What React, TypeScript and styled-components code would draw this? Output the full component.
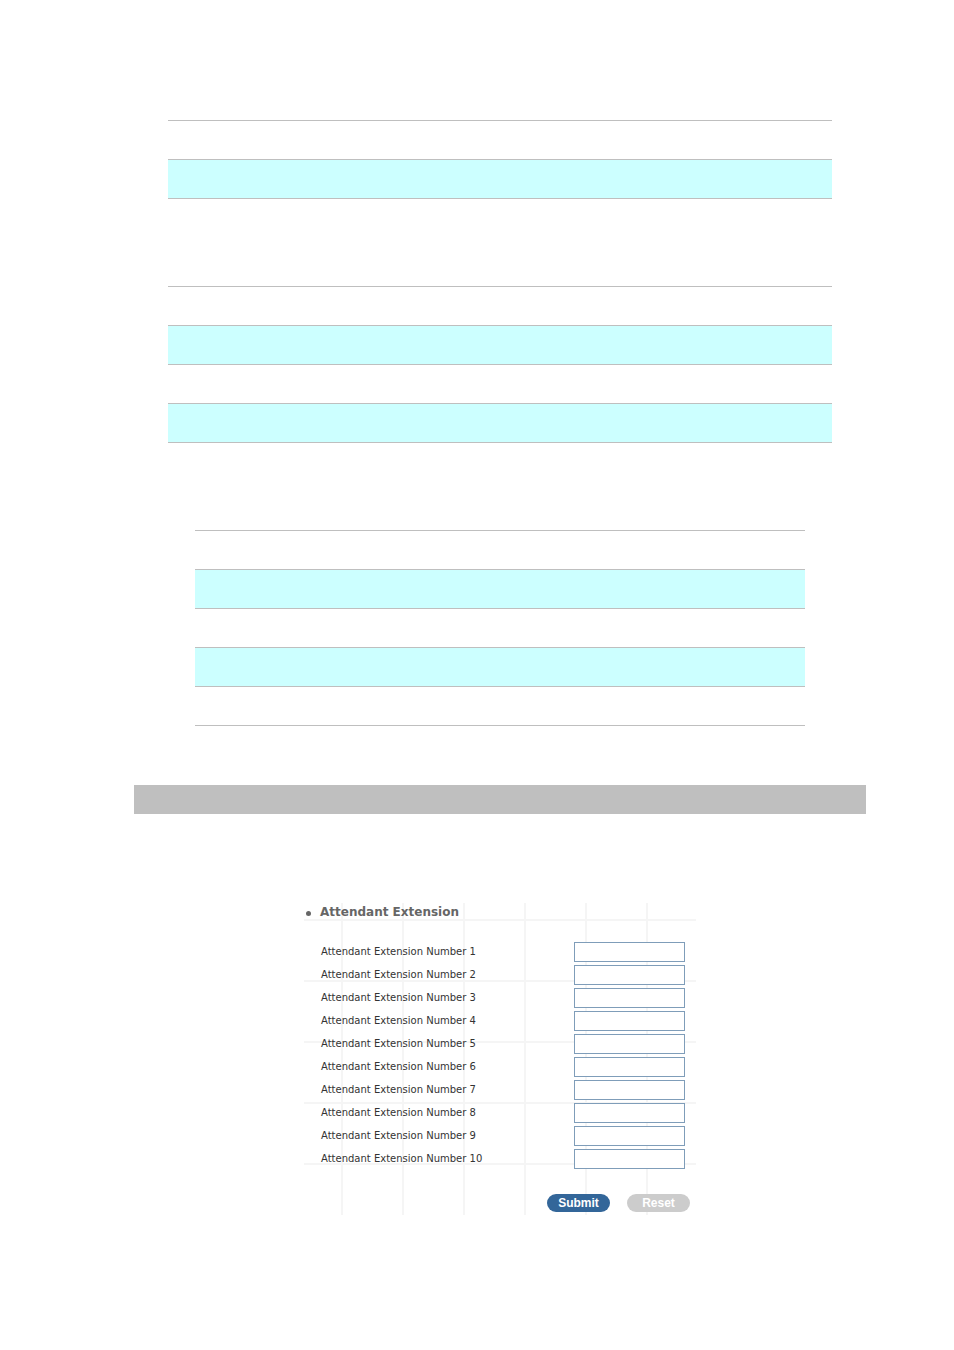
import React from "react";
import styled, { createGlobalStyle } from "styled-components";

const GlobalStyle = createGlobalStyle`
  *, *::before, *::after { box-sizing: border-box; }
  body {
    margin: 0;
    background: #ffffff;
    font-family: "DejaVu Sans", Verdana, sans-serif;
  }
`;

const Page = styled.main`
  display: flex;
  flex-direction: column;
  padding: 120px 88px 135px 134px;
`;

const Grid = styled.table<{ $inset: number; $gap: number }>`
  width: calc(100% - ${(p) => p.$inset * 2}px);
  margin: 0 ${(p) => p.$inset}px ${(p) => p.$gap}px;
  border-collapse: separate;
  border-spacing: 0;
  border-top: 1px solid #bfbfbf;
`;

const Cell = styled.td<{ $tinted: boolean }>`
  height: 39px;
  padding: 0;
  border-bottom: 1px solid #bfbfbf;
  background: ${(p) => (p.$tinted ? "#ccffff" : "transparent")};
`;

const SectionBar = styled.div`
  height: 29px;
  margin-bottom: 89px;
  background: #bfbfbf;
`;

const Panel = styled.form`
  width: 100%;
  max-width: 392px;
  min-height: 312px;
  margin: 0 auto;
  padding-top: 1px;
  background-image:
    linear-gradient(to right, #f5f5f5 2px, transparent 2px),
    linear-gradient(to bottom, #f5f5f5 2px, transparent 2px);
  background-size: 61px 61px;
  background-position: 37px 0, 0 16px;
`;

const Title = styled.h2`
  display: flex;
  align-items: center;
  gap: 9px;
  margin: 0 0 22px;
  padding-left: 2px;
  color: #666666;
  font-size: 12px;
  line-height: 16px;
  font-weight: 700;

  &::before {
    content: "";
    width: 5px;
    height: 5px;
    margin-top: 2px;
    border-radius: 50%;
    background: #666666;
  }
`;

const Fields = styled.div`
  display: flex;
  flex-direction: column;
  gap: 3px;
  padding: 0 11px 0 17px;
`;

const Field = styled.div`
  display: flex;
  align-items: center;
  justify-content: space-between;
`;

const Label = styled.label`
  color: #333333;
  font-size: 10px;
  line-height: 20px;
`;

const TextBox = styled.input`
  width: 111px;
  height: 20px;
  padding: 0 4px;
  border: 1px solid #7f9db9;
  border-radius: 0;
  background: #ffffff;
  font: inherit;
  font-size: 10px;
`;

const Actions = styled.div`
  display: flex;
  justify-content: flex-end;
  gap: 17px;
  margin-top: 25px;
  padding-right: 6px;
`;

const PillButton = styled.button<{ $primary?: boolean }>`
  width: 63px;
  height: 18px;
  padding: 0;
  border: 0;
  border-radius: 9px;
  background: ${(p) => (p.$primary ? "#336699" : "#cccccc")};
  color: #ffffff;
  font: 700 12px/18px "Liberation Sans", Arial, sans-serif;
  cursor: pointer;
`;

const tables = [
  { rows: 2, inset: 34, gap: 87 },
  { rows: 4, inset: 34, gap: 87 },
  { rows: 5, inset: 61, gap: 59 },
];

const extensions = Array.from({ length: 10 }, (_, i) => i + 1);

export default function App() {
  return (
    <>
      <GlobalStyle />
      <Page>
        {tables.map((t, index) => (
          <Grid key={index} $inset={t.inset} $gap={t.gap}>
            <tbody>
              {Array.from({ length: t.rows }, (_, row) => (
                <tr key={row}>
                  <Cell $tinted={row % 2 === 1} />
                </tr>
              ))}
            </tbody>
          </Grid>
        ))}
        <SectionBar />
        <Panel onSubmit={(e) => e.preventDefault()}>
          <Title>Attendant Extension</Title>
          <Fields>
            {extensions.map((n) => (
              <Field key={n}>
                <Label htmlFor={`extension-${n}`}>Attendant Extension Number {n}</Label>
                <TextBox id={`extension-${n}`} type="text" />
              </Field>
            ))}
          </Fields>
          <Actions>
            <PillButton type="submit" $primary>
              Submit
            </PillButton>
            <PillButton type="reset">Reset</PillButton>
          </Actions>
        </Panel>
      </Page>
    </>
  );
}
